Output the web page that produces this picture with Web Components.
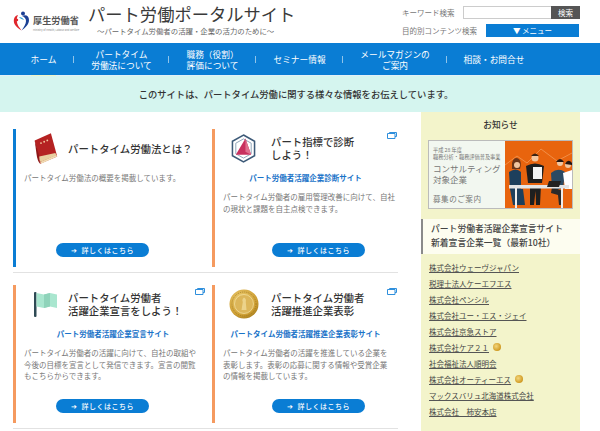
<!DOCTYPE html>
<html lang="ja">
<head>
<meta charset="utf-8">
<title>パート労働ポータルサイト</title>
<style>
  html, body { margin: 0; padding: 0; background: #fff; }
  body { width: 600px; height: 431px; overflow: hidden; font-family: "Noto Sans CJK JP", "Noto Sans", sans-serif; color: #333; }
</style>
</head>
<body>
<site-header></site-header>
<site-nav>
  <nav-item style="--w:61px" current>ホーム</nav-item>
  <nav-item style="--w:95px">パートタイム<br>労働法について</nav-item>
  <nav-item style="--w:87px">職務（役割）<br>評価について</nav-item>
  <nav-item style="--w:87px">セミナー情報</nav-item>
  <nav-item style="--w:104px">メールマガジンの<br>ご案内</nav-item>
  <nav-item style="--w:94px" last>相談・お問合せ</nav-item>
</site-nav>
<info-band>このサイトは、パートタイム労働に関する様々な情報をお伝えしています。</info-band>
<page-main>
  <card-grid>
    <promo-card accent="#0a7dd4" icon-w="44" style="--btn-x:32px;--link-r:0px;--ext-r:7px">
      <svg slot="icon" width="27" height="35" viewBox="0 0 30 36">
        <path d="M3 9 L21 1 L28 27 L9 35 Z" fill="#b52222"/>
        <path d="M3 9 L5 24 Q6 32 9 35 L8 26 Z" fill="#8e1717"/>
        <path d="M9 33 L27 25 L28 27 L10 35 Z" fill="#f0dcb4"/>
        <path d="M8 27 Q8 31 9.500 33 L27 25.500 L26 23 Z" fill="#e8cfa0"/>
        <circle cx="10" cy="12" r="1" fill="#f3c9a0"/><circle cx="13.500" cy="10.500" r="1" fill="#f3c9a0"/><circle cx="17" cy="9" r="1" fill="#f3c9a0"/>
      </svg>
      <span slot="title">パートタイム労働法とは？</span>
      パートタイム労働法の概要を掲載しています。
    </promo-card>
    <promo-card accent="#f59a5f" icon-w="48" external style="--btn-x:49px;--link-r:8px;--ext-r:1px;--icon-r:7px">
      <svg slot="icon" width="25" height="31" viewBox="0 0 26 31">
        <path d="M13 1.500 L24.500 8 V23 L13 29.500 L1.500 23 V8 Z" fill="none" stroke="#3d5a78" stroke-width="1.600"/>
        <path d="M13 5.500 L21 10 V21 L13 25.500 L5 21 V10 Z" fill="none" stroke="#8ea3b8" stroke-width="1"/>
        <path d="M15 5 L21 22 L5 22 Z" fill="#c8315f"/>
        <path d="M15 5 L21 22 L15 19 Z" fill="#e0708f"/>
      </svg>
      <span slot="title">パート指標で診断<br>しよう！</span>
      <span slot="link">パート労働者活躍企業診断サイト</span>
      パートタイム労働者の雇用管理改善に向けて、自社<br>の現状と課題を自主点検できます。
    </promo-card>
    <promo-card accent="#f59a5f" icon-w="44" external style="--btn-x:32px;--link-r:8px;--ext-r:7px">
      <svg slot="icon" width="25" height="27" viewBox="0 0 25 27">
        <rect x="1" y="1" width="2.500" height="25" rx="1" fill="#2f4a55"/>
        <path d="M3.500 2 L11 3.500 L17 2 L24 3.500 V17 L17 15.500 L11 17 L3.500 15.500 Z" fill="#a9e6cf"/>
        <path d="M11 3.500 L17 2 V15.500 L11 17 Z" fill="#8fd3ba"/>
      </svg>
      <span slot="title">パートタイム労働者<br>活躍企業宣言をしよう！</span>
      <span slot="link">パート労働者活躍企業宣言サイト</span>
      パートタイム労働者の活躍に向けて、自社の取組や<br>今後の目標を宣言として発信できます。宣言の閲覧<br>もこちらからできます。
    </promo-card>
    <promo-card accent="#f59a5f" icon-w="48" external style="--btn-x:49px;--link-r:8px;--ext-r:1px;--icon-r:7px">
      <svg slot="icon" width="30" height="30" viewBox="0 0 30 30">
        <defs><radialGradient id="gold" cx=".4" cy=".35" r=".75"><stop offset="0" stop-color="#f0d27a"/><stop offset=".7" stop-color="#cfa035"/><stop offset="1" stop-color="#9c7416"/></radialGradient></defs>
        <circle cx="15" cy="15" r="14.500" fill="url(#gold)"/>
        <circle cx="15" cy="15" r="12" fill="none" stroke="#8f6a14" stroke-width=".6" stroke-dasharray="1 1"/>
        <circle cx="15" cy="15" r="9.500" fill="#dcb65a" stroke="#f3e2a6" stroke-width=".7"/>
        <path d="M15 8.500 Q17.500 9.500 16.800 13 L17.500 21 H12.500 L13.800 13 Q12.500 10.500 15 8.500 Z" fill="#f2e0a0" opacity=".7"/>
      </svg>
      <span slot="title">パートタイム労働者<br>活躍推進企業表彰</span>
      <span slot="link">パートタイム労働者活躍推進企業表彰サイト</span>
      パートタイム労働者の活躍を推進している企業を<br>表彰します。表彰の応募に関する情報や受賞企業<br>の情報を掲載しています。
    </promo-card>
  </card-grid>
  <side-panel>
    <consult-banner></consult-banner>
    <span slot="heading">パート労働者活躍企業宣言サイト<br>新着宣言企業一覧（最新10社）</span>
    <company-link>株式会社ウェーヴジャパン</company-link>
    <company-link>税理士法人ケーエフエス</company-link>
    <company-link>株式会社ペンシル</company-link>
    <company-link>株式会社ユー・エス・ジェイ</company-link>
    <company-link>株式会社京急ストア</company-link>
    <company-link medal>株式会社ケア２１</company-link>
    <company-link>社会福祉法人順明会</company-link>
    <company-link medal>株式会社オーティーエス</company-link>
    <company-link>マックスバリュ北海道株式会社</company-link>
    <company-link>株式会社　柿安本店</company-link>
  </side-panel>
</page-main>

<script>
function defineEl(name, html, setup) {
  const tpl = document.createElement("template");
  tpl.innerHTML = html;
  customElements.define(name, class extends HTMLElement {
    constructor() {
      super();
      this.attachShadow({ mode: "open" }).append(tpl.content.cloneNode(true));
      if (setup) setup(this, this.shadowRoot);
    }
  });
}

defineEl("site-header", `
<style>
  :host { display: flex; height: 43px; padding: 0 20px 0 13px; box-sizing: border-box; background: #fff; }
  .logo { display: flex; flex-direction: column; width: 75px; padding-top: 11px; box-sizing: border-box; }
  .mark { display: flex; gap: 3px; align-items: center; }
  .ja { font-size: 9.2px; font-weight: 700; color: #555; line-height: 12px; white-space: nowrap; margin-top: -3px; }
  .en { font-size: 2.6px; line-height: 4px; color: #888; padding-left: 20px; margin-top: -3px; white-space: nowrap; }
  .title { width: 314px; padding-top: 2px; box-sizing: border-box; }
  h1 { margin: 0; font-size: 17.3px; font-weight: 400; line-height: 24px; color: #3a3a3a; white-space: nowrap; }
  p { margin: 0; font-size: 7.4px; line-height: 9px; color: #666; padding-left: 9px; white-space: nowrap; }
  .tools { display: flex; flex-direction: column; gap: 5px; padding-top: 6px; width: 178px; font-size: 7.5px; color: #777; }
  .row { display: flex; align-items: center; height: 13px; white-space: nowrap; }
  .kw { width: 61px; }
  .ct { width: 84px; }
  .input { width: 88px; height: 13px; box-sizing: border-box; border: 1px solid #ccc; border-right: 0; background: #fff; }
  .go { width: 29px; height: 13px; line-height: 13px; background: #555; color: #fff; text-align: center; }
  .menu { width: 93px; height: 13px; line-height: 13px; background: #0a7dd4; color: #fff; text-align: center; }
</style>
<div class="logo">
  <div class="mark">
    <svg width="17" height="20" viewBox="0 0 17 20">
      <path d="M5 4 C1 5 0 9 1.500 13 C3 16 6 18 8.500 19.500 C6.500 16.500 4 14 3.800 10 C3.700 7.500 4 6 5 4 Z" fill="#e0262c"/>
      <circle cx="4" cy="9" r="1.200" fill="#e0262c"/>
      <path d="M9 5 C13 3 16 5 16 9 C16 13.500 12 17 8.500 19.500 C11 16 13 13 13 10 C13 7.500 11.500 6 9 5 Z" fill="#1b3f94"/>
      <circle cx="10" cy="2.500" r="2" fill="#1b3f94"/>
      <path d="M6 6 C8 6 10 7 11 9 C9.500 8.500 7.500 8 6 6 Z" fill="#2aa0d8"/>
    </svg>
    <span class="ja">厚生労働省</span>
  </div>
  <div class="en">Ministry of Health, Labour and Welfare</div>
</div>
<div class="title">
  <h1>パート労働ポータルサイト</h1>
  <p>～パートタイム労働者の活躍・企業の活力のために～</p>
</div>
<div class="tools">
  <div class="row"><span class="kw">キーワード検索</span><span class="input"></span><span class="go">検索</span></div>
  <div class="row"><span class="ct">目的別コンテンツ検索</span><span class="menu">▼ メニュー</span></div>
</div>`);

defineEl("site-nav", `
<style>
  :host { display: flex; height: 33px; box-sizing: border-box; padding-left: 13px; background: #0a7dd4; border-bottom: 1px solid #e2f0f8; }
</style>
<slot></slot>`);

defineEl("nav-item", `
<style>
  :host { display: flex; justify-content: center; width: var(--w); height: 32px; color: #fff; font-size: 8.7px; line-height: 11px; text-align: center; background: linear-gradient(#8fc4ea, #8fc4ea) no-repeat right center / 1px 7px; }
  :host([last]) { background: none; }
  .label { display: flex; align-items: center; height: 33px; box-sizing: border-box; white-space: nowrap; }
  :host([current]) .label { border-bottom: 1px solid #f0f4c8; }
  span { display: block; }
</style>
<div class="label"><span><slot></slot></span></div>`);

defineEl("info-band", `
<style>
  :host { display: block; height: 36px; line-height: 36px; background: #d5f5ef; text-align: center; font-size: 9.300px; font-weight: 500; color: #333; padding-right: 8px; box-sizing: border-box; }
</style>
<slot></slot>`);

defineEl("page-main", `
<style>
  :host { display: flex; height: 319px; padding-left: 13px; gap: 23px; }
</style>
<slot></slot>`);

defineEl("card-grid", `
<style>
  :host { display: grid; grid-template-columns: 199px 186px; grid-template-rows: 144px 144px; row-gap: 12px; padding-top: 17px; width: 385px; height: 319px; box-sizing: border-box; background: linear-gradient(#e2e2e2, #e2e2e2) no-repeat 0 160px / 385px 1px, linear-gradient(#e2e2e2, #e2e2e2) no-repeat 0 316px / 385px 1px; }
</style>
<slot></slot>`);

defineEl("promo-card", `
<style>
  :host { display: flex; flex-direction: column; height: 138px; box-sizing: border-box; padding: 0 2px 10px 8px; border-left: 3px solid var(--accent); position: relative; color: #666; }
  .head { display: flex; align-items: center; height: 43px; padding-bottom: 5px; box-sizing: border-box; flex: none; }
  .icon { display: flex; justify-content: center; flex: none; width: var(--icon-w); padding-right: var(--icon-r, 2px); box-sizing: border-box; }
  .title { font-size: 10.400px; line-height: 13px; font-weight: 500; color: #333; white-space: nowrap; }
  .link { display: none; text-align: center; font-size: 7.500px; font-weight: 700; line-height: 12px; color: #1a73c8; margin-bottom: 7px; padding-right: var(--link-r, 0); white-space: nowrap; }
  .link.on { display: block; }
  .desc { font-size: 7.500px; line-height: 11.700px; color: #777; flex: 1; white-space: nowrap; }
  .btn { align-self: flex-start; width: 93px; height: 14px; line-height: 14px; border-radius: 7px; background: #0a7dd4; color: #fff; font-size: 7px; font-weight: 500; text-align: center; letter-spacing: .5px; margin-left: var(--btn-x, 32px); }
  .ext { position: absolute; top: 3px; right: var(--ext-r, 1px); display: none; }
  .ext.on { display: block; }
</style>
<svg class="ext" width="10" height="7" viewBox="0 0 10 7"><path d="M2.500 1.500 V.5 H9.500 V4.500 H8 M.5 1.500 H8 V6.500 H.5 Z" fill="none" stroke="#2f8fdc" stroke-width="1"/></svg>
<div class="head"><div class="icon"><slot name="icon"></slot></div><div class="title"><slot name="title"></slot></div></div>
<div class="link"><slot name="link"></slot></div>
<div class="desc"><slot></slot></div>
<div class="btn">➔&nbsp; 詳しくはこちら</div>`, (el, root) => {
  el.style.setProperty("--accent", el.getAttribute("accent"));
  el.style.setProperty("--icon-w", el.getAttribute("icon-w") + "px");
  if (el.hasAttribute("external")) root.querySelector(".ext").classList.add("on");
  if (el.querySelector('[slot="link"]')) root.querySelector(".link").classList.add("on");
});

defineEl("side-panel", `
<style>
  :host { display: block; width: 159px; height: 319px; background: #f3f4cb; box-sizing: border-box; }
  .news { text-align: center; font-size: 8.700px; font-weight: 500; line-height: 14px; padding-top: 6px; height: 28px; box-sizing: border-box; color: #333; }
  .banner { padding: 0 7px; height: 79px; box-sizing: border-box; }
  .heading { background: #fdfdf0; border-left: 2px solid #8a8a8a; height: 35px; padding: 3px 0 0 8px; box-sizing: border-box; font-size: 8.800px; line-height: 13.500px; font-weight: 500; color: #444; white-space: nowrap; }
  .list { padding: 5px 8px 0; }
</style>
<div class="news">お知らせ</div>
<div class="banner"><slot name="banner"></slot></div>
<div class="heading"><slot name="heading"></slot></div>
<div class="list"><slot></slot></div>`, (el) => {
  const b = el.querySelector("consult-banner");
  if (b) b.slot = "banner";
});

defineEl("consult-banner", `
<style>
  :host { display: flex; width: 145px; height: 69px; box-sizing: border-box; border: 1px solid #bbb; background: #f2f7f0; color: #777; }
  .txt { width: 76px; padding: 5px 0 0 4px; box-sizing: border-box; white-space: nowrap; }
  .s { font-size: 5.200px; line-height: 7px; }
  .b { font-size: 8.500px; line-height: 11px; margin-top: 3px; }
  .m { font-size: 7.600px; line-height: 10px; margin-top: 9px; letter-spacing: .5px; }
  svg { flex: none; display: block; }
</style>
<div class="txt">
  <div class="s">平成 28 年度</div>
  <div class="s">職務分析・職務評価普及事業</div>
  <div class="b">コンサルティング<br>対象企業</div>
  <div class="m">募集のご案内</div>
</div>
<svg width="67" height="67" viewBox="0 0 67 67">
  <rect width="67" height="67" fill="#e8640e"/>
  <path d="M0 24 L12 15 L22 22 L36 8 L52 20 L67 12" fill="none" stroke="#f4a060" stroke-width=".7"/>
  <path d="M7 22 Q9 15 14 18 Q17 21 15 28 L7 28 Z" fill="#6b3518"/>
  <circle cx="12" cy="24" r="3" fill="#f1c6a0"/>
  <path d="M4 31 Q11 26 16 31 L16 48 L5 48 Z" fill="#1d3f5c"/>
  <path d="M5 48 H18 L20 64 H8 Z" fill="#1d3f5c"/>
  <circle cx="30" cy="17" r="3.500" fill="#f1c6a0"/><path d="M26 15 Q30 10 34 15 Z" fill="#3a2414"/>
  <path d="M21 25 Q30 20 39 25 L37 42 H23 Z" fill="#1f1f1f"/>
  <rect x="28" y="26" width="9" height="12" fill="#f5f5f5"/>
  <path d="M25 44 H36 L35 64 H31 L30.500 50 L29 64 H25 Z" fill="#1f1f1f"/>
  <circle cx="55" cy="22" r="3" fill="#f1c6a0"/><path d="M51 21 Q55 15 59 21 Z" fill="#231510"/>
  <path d="M46 32 Q53 26 60 31 L58 48 H47 Z" fill="#2b4a63"/>
  <circle cx="63" cy="24" r="3" fill="#f1c6a0"/><path d="M60 23 Q63 17 67 22 V24 Z" fill="#231510"/>
  <path d="M58 32 L67 29 V48 H60 Z" fill="#fff"/>
  <path d="M47 46 L58 50 V64 H54 L53 54 L46 52 Z" fill="#2a2a2a"/>
  <rect x="4" y="44" width="60" height="3.500" fill="#e4e4e4"/>
  <rect x="10" y="47" width="2" height="20" fill="#eee"/><rect x="56" y="47" width="2" height="20" fill="#eee"/>
  <path d="M44 40 L56 40 L54 46 H42 Z" fill="#222"/>
</svg>`);

defineEl("company-link", `
<style>
  :host { display: flex; align-items: center; height: 16px; font-size: 7.500px; color: #444; white-space: nowrap; }
  u { text-decoration-color: #555; text-underline-offset: 1px; }
  i { display: none; width: 8px; height: 8px; margin-left: 4px; border-radius: 50%; background: radial-gradient(circle at 40% 40%, #f3d77e, #d09a22 70%, #a97a12); }
  i.on { display: block; }
</style>
<u><slot></slot></u><i></i>`, (el, root) => {
  if (el.hasAttribute("medal")) root.querySelector("i").classList.add("on");
});
</script>
</body>
</html>
